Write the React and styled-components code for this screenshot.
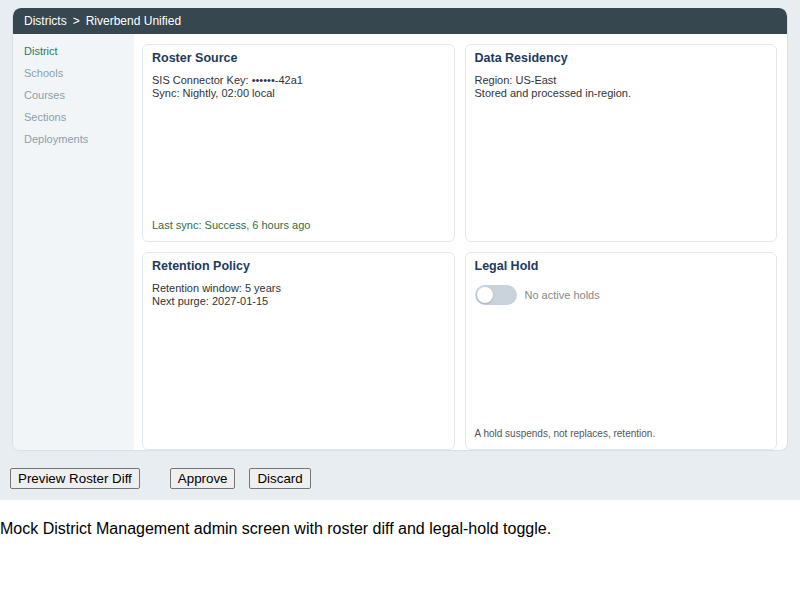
import React from "react";
import styled, { createGlobalStyle } from "styled-components";

const GlobalStyle = createGlobalStyle`
  body {
    margin: 0;
    font-family: "Liberation Sans", Arial, sans-serif;
    color: #000;
  }
`;

const Screen = styled.div`
  background-color: #e8edf1;
  padding: 8px 0 11px;
`;

const Panel = styled.div`
  margin: 0 12px;
  background-color: #fff;
  border: 1px solid #d9e0e6;
  border-top: none;
  border-radius: 8px;
  overflow: hidden;
`;

const Header = styled.div`
  height: 26px;
  display: flex;
  align-items: center;
  padding: 0 11px;
  background-color: #37474f;
  color: #fff;
  font-size: 12px;
  border-radius: 8px 8px 0 0;
`;

const Crumb = styled.span`
  margin: 0 6px;
`;

const Body = styled.div`
  display: flex;
`;

const Sidebar = styled.nav`
  width: 121px;
  flex-shrink: 0;
  background-color: #f2f5f8;
  padding: 6px 0 0 11px;
  box-sizing: border-box;
`;

const NavItem = styled.div`
  font-size: 11px;
  line-height: 22px;
  color: ${(p) => (p.$active ? "#2c7a5c" : "#8c9eab")};
`;

const Grid = styled.div`
  flex: 1;
  display: grid;
  grid-template-columns: 1fr 1fr;
  grid-auto-rows: 198px;
  gap: 10px;
  padding: 10px 10px 0 8px;
`;

const Card = styled.section`
  border: 1px solid #e2e8ee;
  border-radius: 6px;
  padding: 6px 9px 10px;
  display: flex;
  flex-direction: column;
`;

const Title = styled.h3`
  margin: 0 0 9px;
  font-size: 12.5px;
  font-weight: bold;
  color: #1d3a5c;
`;

const Line = styled.div`
  font-size: 11px;
  line-height: 13px;
  color: #333;
`;

const Footer = styled.div`
  margin-top: auto;
  font-size: ${(p) => (p.$small ? "10px" : "11px")};
  color: ${(p) => (p.$ok ? "#2e6e42" : "#555")};
`;

const ToggleRow = styled.div`
  display: flex;
  align-items: center;
  gap: 8px;
  margin-top: 3px;
`;

const Track = styled.div`
  position: relative;
  width: 42px;
  height: 20px;
  border-radius: 10px;
  background-color: #cad3dc;
`;

const Knob = styled.div`
  position: absolute;
  left: 2px;
  top: 2px;
  width: 16px;
  height: 16px;
  border-radius: 50%;
  background-color: #fff;
  box-shadow: 0 1px 2px rgba(0, 0, 0, 0.2);
`;

const ToggleLabel = styled.span`
  font-size: 11px;
  color: #888;
`;

const Actions = styled.div`
  display: flex;
  padding: 0 10px;
  margin-top: 17px;
  gap: 14px;
`;

const Button = styled.button`
  font-family: "Liberation Sans", Arial, sans-serif;
  font-size: 13.33px;
  height: 21px;
  padding: 1px 7px;
  margin-right: ${(p) => (p.$spaced ? "16px" : "0")};
  background-color: #efefef;
  border: 1px solid #767676;
  border-radius: 2px;
  color: #000;
`;

const Caption = styled.p`
  margin: 20px 0;
  font-size: 16px;
`;

const navItems = ["District", "Schools", "Courses", "Sections", "Deployments"];

export default function App() {
  return (
    <>
      <GlobalStyle />
      <Screen>
        <Panel>
          <Header>
            Districts<Crumb>&gt;</Crumb>Riverbend Unified
          </Header>
          <Body>
            <Sidebar>
              {navItems.map((item, i) => (
                <NavItem key={item} $active={i === 0}>
                  {item}
                </NavItem>
              ))}
            </Sidebar>
            <Grid>
              <Card>
                <Title>Roster Source</Title>
                <Line>SIS Connector Key: ••••••-42a1</Line>
                <Line>Sync: Nightly, 02:00 local</Line>
                <Footer $ok>Last sync: Success, 6 hours ago</Footer>
              </Card>
              <Card>
                <Title>Data Residency</Title>
                <Line>Region: US-East</Line>
                <Line>Stored and processed in-region.</Line>
              </Card>
              <Card>
                <Title>Retention Policy</Title>
                <Line>Retention window: 5 years</Line>
                <Line>Next purge: 2027-01-15</Line>
              </Card>
              <Card>
                <Title>Legal Hold</Title>
                <ToggleRow>
                  <Track>
                    <Knob />
                  </Track>
                  <ToggleLabel>No active holds</ToggleLabel>
                </ToggleRow>
                <Footer $small>A hold suspends, not replaces, retention.</Footer>
              </Card>
            </Grid>
          </Body>
        </Panel>
        <Actions>
          <Button $spaced>Preview Roster Diff</Button>
          <Button>Approve</Button>
          <Button>Discard</Button>
        </Actions>
      </Screen>
      <Caption>
        Mock District Management admin screen with roster diff and legal-hold toggle.
      </Caption>
    </>
  );
}
